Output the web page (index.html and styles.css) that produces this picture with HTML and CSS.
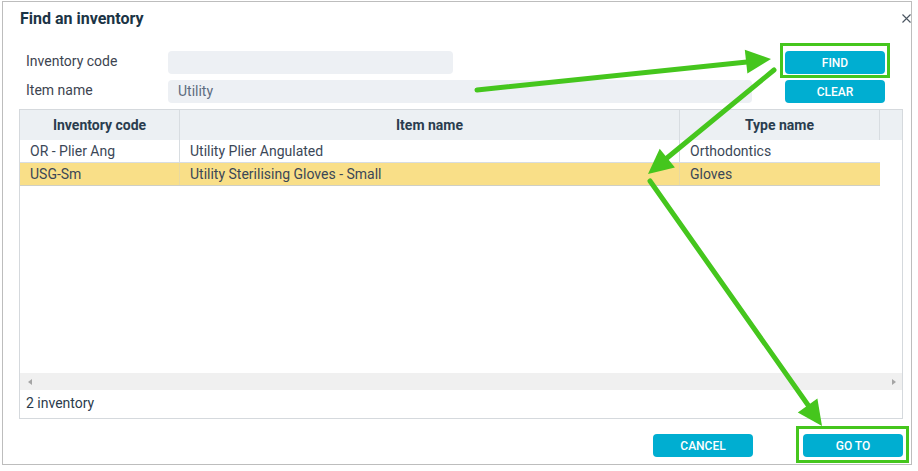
FILE: index.html
```html
<!DOCTYPE html>
<html lang="en">
<head>
  <meta charset="UTF-8" />
  <title>Find an inventory</title>
  <link rel="stylesheet" href="styles.css">
</head>
<body>
  <div class="dialog">
    <div class="dialog-title">
      <h1>Find an inventory</h1>
      <svg class="close" width="9" height="9" viewBox="0 0 9 9"><path d="M0.5 0.5 L8.5 8.5 M8.5 0.5 L0.5 8.5" stroke="#4a5560" stroke-width="1.1" fill="none"/></svg>
    </div>

    <div class="search">
      <div class="search-row">
        <label>Inventory code</label>
        <div class="field short"></div>
        <div class="spacer"></div>
        <button class="btn">FIND</button>
      </div>
      <div class="search-row">
        <label>Item name</label>
        <div class="field long">Utility</div>
        <div class="spacer"></div>
        <button class="btn">CLEAR</button>
      </div>
    </div>

    <div class="grid">
      <div class="grid-head">
        <div class="cell c1">Inventory code</div>
        <div class="cell c2">Item name</div>
        <div class="cell c3">Type name</div>
        <div class="cell filler"></div>
      </div>
      <div class="grid-body">
        <div class="grid-row">
          <div class="cell c1">OR - Plier Ang</div>
          <div class="cell c2">Utility Plier Angulated</div>
          <div class="cell c3">Orthodontics</div>
        </div>
        <div class="grid-row selected">
          <div class="cell c1">USG-Sm</div>
          <div class="cell c2">Utility Sterilising Gloves - Small</div>
          <div class="cell c3">Gloves</div>
        </div>
      </div>
      <div class="hscroll">
        <span class="arrow-left"></span>
        <span class="arrow-right"></span>
      </div>
      <div class="grid-foot">2 inventory</div>
    </div>

    <div class="dialog-actions">
      <button class="btn">CANCEL</button>
      <button class="btn">GO TO</button>
    </div>
  </div>

  <svg class="annotations" width="918" height="471" viewBox="0 0 918 471">
    <g stroke="#45c61d" fill="none">
      <rect x="781.5" y="44.5" width="107" height="32" stroke-width="3"/>
      <rect x="797.5" y="427.5" width="110" height="34" stroke-width="3"/>
      <line x1="477" y1="90" x2="747" y2="62" stroke-width="5" stroke-linecap="round"/>
      <line x1="774" y1="70" x2="667" y2="158" stroke-width="5" stroke-linecap="round"/>
      <line x1="650" y1="181" x2="808" y2="405" stroke-width="5" stroke-linecap="round"/>
    </g>
    <g fill="#45c61d">
      <polygon points="771,59 744.8,49.7 747.4,73.5"/>
      <polygon points="648,174 674.9,167.4 659.7,148.8"/>
      <polygon points="822,426 797.8,412.4 817.4,398.6"/>
    </g>
  </svg>
</body>
</html>
```

FILE: styles.css
```css
body {
  margin: 0;
  background: #fff;
  font-family: Roboto, "Liberation Sans", Arial, sans-serif;
  font-size: 14px;
  color: #3b4757;
}
.dialog {
  box-sizing: border-box;
  width: 910px;
  height: 464px;
  margin: 1px 0 0 2px;
  border: 1px solid #bdbdbd;
  display: flex;
  flex-direction: column;
}
.dialog-title {
  display: flex;
  justify-content: space-between;
  align-items: center;
  height: 32px;
  padding: 0 0 0 17px;
}
.dialog-title h1 {
  margin: 0;
  font-size: 16px;
  font-weight: 700;
  color: #1b3445;
}
.search {
  display: flex;
  flex-direction: column;
  gap: 6px;
  margin-top: 17px;
}
.search-row {
  display: flex;
  align-items: center;
  height: 23px;
  padding: 0 26px 0 23px;
}
.search-row label {
  width: 142px;
  color: #3d4450;
  margin-top: -4px;
}
.field {
  height: 23px;
  line-height: 23px;
  background: #edf0f4;
  border-radius: 4px;
  padding: 0 10px;
  box-sizing: border-box;
  color: #5d6c80;
}
.field.short {
  width: 285px;
}
.field.long {
  width: 584px;
}
.spacer {
  flex: 1;
}
.btn {
  width: 100px;
  height: 23px;
  border: none;
  border-radius: 4px;
  background: #00aed1;
  color: #fff;
  font-family: Roboto, "Liberation Sans", Arial, sans-serif;
  font-size: 12px;
  font-weight: 500;
  padding: 0;
  cursor: pointer;
}
.grid {
  margin: 6px 8px 0 16px;
  border: 1px solid #d5d9dd;
  display: flex;
  flex-direction: column;
  height: 310px;
  box-sizing: border-box;
}
.grid-head {
  display: flex;
  height: 30px;
  background: #ecf0f3;
  font-weight: 700;
  color: #2a3d4f;
}
.grid-head .cell {
  justify-content: center;
  border-right: 1px solid #d8dde1;
}
.grid-head .filler {
  flex: 1;
  border-right: none;
}
.cell {
  display: flex;
  align-items: center;
  box-sizing: border-box;
  padding: 0 10px;
  white-space: nowrap;
}
.c1 {
  width: 160px;
  border-right: 1px solid #d8dde1;
}
.c2 {
  width: 500px;
  border-right: 1px solid #d8dde1;
}
.c3 {
  width: 200px;
}
.grid-body {
  flex: 1;
}
.grid-row {
  display: flex;
  width: 860px;
  height: 23px;
  box-sizing: border-box;
  border-bottom: 1px solid #d8dde1;
  color: #3b4757;
}
.grid-row.selected {
  background: #f9df88;
  border-bottom-color: #cfcfc4;
}
.grid-row.selected .cell {
  border-right-color: #e8d9a2;
}
.hscroll {
  height: 17px;
  background: #f0f0f0;
  display: flex;
  justify-content: space-between;
  align-items: center;
  padding: 0 6px 0 8px;
}
.arrow-left {
  width: 0;
  height: 0;
  border-top: 3px solid transparent;
  border-bottom: 3px solid transparent;
  border-right: 4px solid #a5a5a5;
}
.arrow-right {
  width: 0;
  height: 0;
  border-top: 3px solid transparent;
  border-bottom: 3px solid transparent;
  border-left: 4px solid #a5a5a5;
}
.grid-foot {
  height: 28px;
  line-height: 26px;
  padding-left: 6px;
  color: #2b3b4c;
}
.dialog-actions {
  display: flex;
  justify-content: flex-end;
  gap: 50px;
  padding: 15px 8px 0 0;
}
.annotations {
  position: absolute;
  left: 0;
  top: 0;
  pointer-events: none;
}
```
